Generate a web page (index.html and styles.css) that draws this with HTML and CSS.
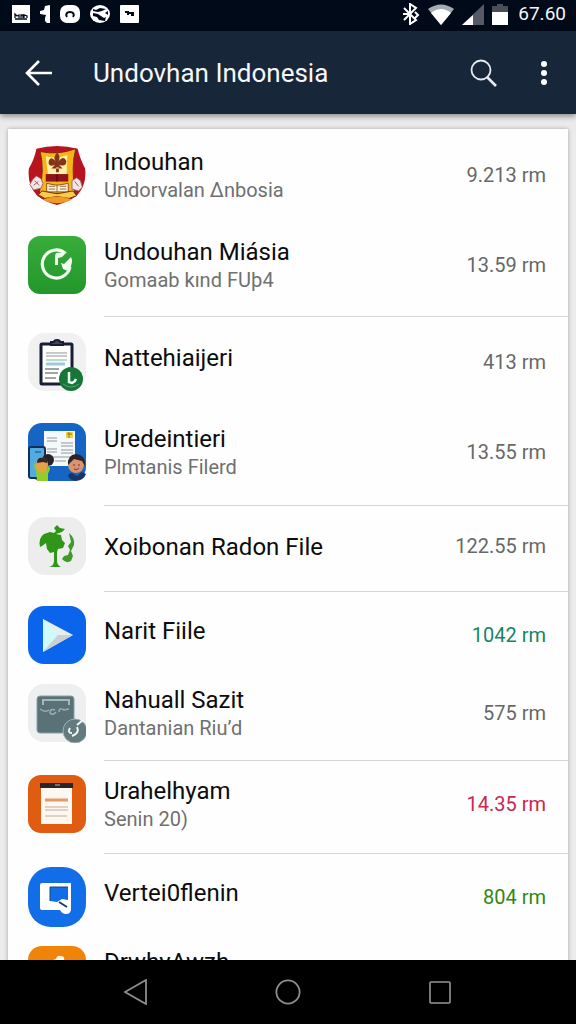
FILE: index.html
```
<!DOCTYPE html>
<html lang="id">
<head>
    <meta charset="UTF-8">
    <meta name="viewport" content="width=device-width, initial-scale=1">
    <title>Undovhan Indonesia</title>
    <link rel="stylesheet" href="styles.css">
</head>
<body>
    <div class="status-bar">
        <div class="status-left">
            <svg width="18" height="18" viewBox="0 0 18 18"><path fill="#fff" d="M0 0h18v18H0z"/><path d="M3 13V9l2 2 2-1v3M9 13v-3h2v3M12 13v-3l3 1v2M3 14h12" fill="none" stroke="#000a18" stroke-width="1.3"/></svg>
            <svg width="10" height="18" viewBox="0 0 10 18"><path fill="#fff" d="M5 1l5-1v18H7l-2-2v-3l1-3-6-1V6l4-1z"/></svg>
            <svg width="20" height="18" viewBox="0 0 20 18"><rect width="20" height="18" rx="7" fill="#fff"/><path d="M7 12c-2-3 0-5 3-5s5 2 3 5" fill="none" stroke="#000a18" stroke-width="2"/></svg>
            <svg width="20" height="18" viewBox="0 0 20 18"><ellipse cx="10" cy="9" rx="10" ry="9" fill="#fff"/><path d="M3 4l3 1 4-2 6 1-4 2-4 1-5-1zM3 8l5 1 6 4 2-1-1 4-6-1-2-3-4-1zM15 8l3-2v4z" fill="#000a18"/></svg>
            <svg width="19" height="18" viewBox="0 0 19 18"><rect width="19" height="18" rx="1" fill="#fff"/><path d="M5 7h3v3M9 8h4v2h-2" fill="none" stroke="#000a18" stroke-width="2"/></svg>
        </div>
        <div class="status-right">
            <svg width="18" height="22" viewBox="0 0 18 22"><path d="M2 5l12 12-6 4V1l6 4L2 17M1 11h6M13 9l3 3-3 3" fill="none" stroke="#fff" stroke-width="2"/></svg>
            <svg width="26" height="21" viewBox="0 0 26 21"><path d="M0 5Q13-4 26 5L13 21z" fill="#a5abb3"/><path d="M3 9Q13 1 23 9L13 21z" fill="#fff"/></svg>
            <svg width="22" height="21" viewBox="0 0 22 21"><path d="M0 21L22 0v21z" fill="#555b65"/><path d="M0 21l11-10v10z" fill="#fff"/></svg>
            <svg width="16" height="21" viewBox="0 0 16 21"><path d="M5 0h6v2h5v7H0V2h5z" fill="#484d56"/><path d="M0 8h16v13H0z" fill="#fff"/></svg>
            <span class="clock">67.60</span>
        </div>
    </div>

    <header class="app-bar">
        <button class="icon-button" aria-label="Kembali">
            <svg width="28" height="28" viewBox="0 0 28 28"><path d="M14 2L2 14l12 12M2 14h25" fill="none" stroke="#fff" stroke-width="2.6"/></svg>
        </button>
        <h1>Undovhan Indonesia</h1>
        <button class="icon-button" aria-label="Cari">
            <svg width="28" height="28" viewBox="0 0 28 28"><circle cx="11" cy="11" r="9.5" fill="none" stroke="#e6eaf0" stroke-width="1.8"/><path d="M17 18l9 9" stroke="#e6eaf0" stroke-width="2.6"/></svg>
        </button>
        <button class="icon-button" aria-label="Menu">
            <svg width="8" height="24" viewBox="0 0 8 24"><g fill="#fff"><circle cx="4" cy="3" r="3"/><circle cx="4" cy="12" r="3"/><circle cx="4" cy="21" r="3"/></g></svg>
        </button>
    </header>

    <main>
        <div class="card">
            <ul class="group">
                <li class="row">
                    <svg class="app-icon" viewBox="0 0 60 64">
                        <path d="M8 4Q30-2 52 4Q55 16 60 25Q62 43 51 54Q41 61 30 64Q18 61 9 54Q-2 43 0 25Q6 15 8 4z" fill="#b81420"/>
                        <path d="M12 7Q31 11 50 4Q45 22 49 52H11Q17 26 12 7z" fill="#f7b318" stroke="#7b2a12"/>
                        <path d="M18 12q12 3 23-1l-1 25H21z" fill="#fff2a8"/>
                        <path d="M30 8q-5 6-1 10-6-8-8 0 0 6 7 3l-4 4h12l-4-4q8 3 8-4-3-7-9 1 4-5-1-10zM29 24h3v5h-3z" fill="#87331c"/>
                        <path d="M18 31h24v8H18z" fill="#8d1418"/><path d="M30 31v8" stroke="#3c080a"/>
                        <path d="M19 41l11 2 12-2v9H19z" fill="#fff4d8" stroke="#8a4d17"/><path d="M30 42v9M21 44h7M21 47h7M33 44h7M33 47h7" stroke="#8b6646"/>
                        <path d="M4 37l4-4 5 3 2 5-2 5-8 2-4-6zM46 38l5-3 4 3 2 7-4 4-7-2z" fill="#f4e5e5" stroke="#a2676a"/><path d="M6 38l5 5M5 43l5-4M49 39l4 5" stroke="#985b61"/>
                        <path d="M14 49l16 3 17-3 4 5-8 3-13-2-13 2-7-4z" fill="#f5cd4b" stroke="#74280d"/><path d="M15 58q15-6 31 0-16 8-31 0z" fill="#ef9b26"/>
                    </svg>
                    <div class="text"><h2>Indouhan</h2><p>Undorvalan Δnbosia</p></div>
                    <span class="size">9.213 rm</span>
                </li>
                <li class="row">
                    <svg class="app-icon" viewBox="0 0 58 58">
                        <defs><linearGradient id="green" x2="0" y2="1"><stop stop-color="#37ad3b"/><stop offset="1" stop-color="#23962b"/></linearGradient></defs>
                        <rect width="58" height="58" rx="12" fill="url(#green)"/>
                        <path d="M37 17A14 14 0 1 0 42 31" fill="none" stroke="#f2fff0" stroke-width="3.2"/>
                        <path d="M28 17l11-1-5 5-4 1v7h-3v-9zM33 27l3 1 7-7 1 3q0 7-4 11l-5-2z" fill="#f2fff0"/>
                    </svg>
                    <div class="text"><h2>Undouhan Miásia</h2><p>Gomaab kınd FUþ4</p></div>
                    <span class="size">13.59 rm</span>
                </li>
            </ul>

            <ul class="group group-tall">
                <li class="row">
                    <svg class="app-icon" viewBox="0 0 58 58">
                        <rect width="58" height="58" rx="17" fill="#f1f1f2"/>
                        <rect x="13" y="11" width="31" height="40" rx="1" fill="#fff" stroke="#171f36" stroke-width="3"/>
                        <path d="M23 12V9h3q0-2 3-2t3 2h3v3z" fill="#414956" stroke="#171f36" stroke-width="2"/>
                        <path d="M18 20h21M18 23h21" stroke="#c8c8c4" stroke-width="2"/><path d="M18 27h21" stroke="#b9ddc9" stroke-width="2"/><path d="M18 31h19" stroke="#9dcdd6" stroke-width="3"/>
                        <path d="M17 36h14M17 40h13M17 45h11" stroke="#444a50" stroke-width="1.2"/>
                        <circle cx="43" cy="46" r="12" fill="#187538"/><path d="M41 39v10l3 1q3-1 4-4" fill="none" stroke="#edfff0" stroke-width="2.5"/><path d="M35 51q8 6 16 0" fill="none" stroke="#58a06b"/>
                    </svg>
                    <div class="text text-single"><h2>Nattehiaijeri</h2></div>
                    <span class="size">413 rm</span>
                </li>
                <li class="row">
                    <svg class="app-icon" viewBox="0 0 58 58">
                        <rect width="58" height="58" rx="14" fill="#1565c5"/>
                        <path d="M16 8h31v35H16z" fill="#f5f9fa"/><path d="M38 9h7v6h-7z" fill="#f1cf38"/><path d="M39 11h5M41 9v6" stroke="#967c20"/>
                        <path d="M19 15h10M19 18h10M19 26h10M19 29h10M33 20h12M33 23h12M33 27h12M33 30h12M25 34h17M27 38h11" stroke="#b2b8bc" stroke-width="1.3"/>
                        <rect x="1" y="24" width="16" height="31" rx="2" fill="#53acdf" stroke="#142e55" stroke-width="2"/><path d="M7 29h6" stroke="#23466d"/>
                        <circle cx="20" cy="37" r="6" fill="#282228"/><path d="M8 42q0-7 6-7t6 7q0 8-6 9t-6-9z" fill="#e7a247"/><path d="M9 40q0-6 6-5t4 5l-4-1z" fill="#352526"/><path d="M8 47l-2-4 1-3 3 8 4 2 5-3 2-5 1 4-2 5v7H9z" fill="#8fcf27"/>
                        <circle cx="48" cy="42" r="8" fill="#d9936d"/><path d="M40 42q-1-10 8-11 10 1 9 12l-3-5-8-2-4 4z" fill="#292529"/><path d="M45 42h2M50 42h2M46 46q3 2 5-1" fill="none" stroke="#703a30"/><path d="M40 53q1-3 4-3l5 3 5-4 4 2q-2 6-10 7-5 0-8-5z" fill="#183663"/>
                    </svg>
                    <div class="text"><h2>Uredeintieri</h2><p>Plmtanis Filerd</p></div>
                    <span class="size">13.55 rm</span>
                </li>
            </ul>

            <ul class="group">
                <li class="row row-short">
                    <svg class="app-icon" viewBox="0 0 58 58">
                        <rect width="58" height="58" rx="18" fill="#ededed"/>
                        <path d="M26 11l3-3 3 3 5 1-3 3-6 2 5 1 1 5 3 3-2 5-5 1-1 3v9q0 4 4 6H21q5-1 5-6V35l-4 1-3-4-1-6-4 3-2 1q-2-9 4-13l6-2 4 1 2-2z" fill="#2f9618"/>
                        <path d="M41 16q6 5 5 12l-3 6 2 5-2 5q-5 3-9-2l2-3 4-1 2-5-2-4 3-4z" fill="#3f9c28"/>
                    </svg>
                    <div class="text"><h2>Xoibonan Radon File</h2></div>
                    <span class="size">122.55 rm</span>
                </li>
            </ul>

            <ul class="group group-open">
                <li class="row row-mid">
                    <svg class="app-icon" viewBox="0 0 58 58">
                        <rect width="58" height="58" rx="16" fill="#0b64ec"/>
                        <path d="M15 13l30 16-30 17z" fill="#e7eef0"/><path d="M15 13l15 16-15 17z" fill="#cefafa"/><path d="M30 29h15L15 46z" fill="#cbd0d5"/>
                    </svg>
                    <div class="text text-single"><h2>Narit Fiile</h2></div>
                    <span class="size teal">1042 rm</span>
                </li>
                <li class="row row-compact">
                    <svg class="app-icon" viewBox="0 0 58 58">
                        <rect width="58" height="58" rx="16" fill="#eeeff0"/>
                        <rect x="9" y="12" width="37" height="37" rx="3" fill="#587277" stroke="#8c9fa2"/>
                        <path d="M15 21v-5h26v5" fill="none" stroke="#a2b8ba" stroke-width="2"/><path d="M12 25q5 4 9 1m6 0q-5-2-5 3 3 3 6-1m3 0q0-5 5-2l5-1" fill="none" stroke="#9bafb1" stroke-width="1.5"/>
                        <circle cx="47" cy="47" r="12" fill="#637a7e" stroke="#a4b0b4"/><path d="M42 44q-3 5 2 5M49 43q3 6-5 9M49 41l6-5" fill="none" stroke="#f0f7f7" stroke-width="2"/>
                    </svg>
                    <div class="text"><h2>Nahuall Sazit</h2><p>Dantanian Riu’d</p></div>
                    <span class="size">575 rm</span>
                </li>
            </ul>

            <ul class="group">
                <li class="row row-mid">
                    <svg class="app-icon" viewBox="0 0 58 58">
                        <rect width="58" height="58" rx="13" fill="#df5c10"/>
                        <path d="M13 8h31v41H13z" fill="#fff8f1"/><path d="M12 8h33v5H12z" fill="#28262c"/><path d="M27 10h5" stroke="#bbb"/>
                        <path d="M17 25h23" stroke="#df9b6b" stroke-width="3"/><path d="M17 32h23M17 35h23M17 41h22" stroke="#c9aa9a" stroke-width="1.2"/>
                    </svg>
                    <div class="text"><h2>Urahelhyam</h2><p>Senin 20)</p></div>
                    <span class="size red">14.35 rm</span>
                </li>
            </ul>

            <ul class="group">
                <li class="row row-mid">
                    <svg class="app-icon" viewBox="0 0 58 60">
                        <rect width="58" height="60" rx="23" fill="#126ee8"/>
                        <path d="M14 16h29v26q0 5-5 5-4 0-6-4H14q-2 0-2-2V18q0-2 2-2z" fill="#fff"/><path d="M22 20h18v13l-6-1-5 3-7-1z" fill="#126ee8"/><path d="M22 34V20h18" fill="none" stroke="#174780"/><path d="M31 35l8 5" stroke="#173e68" stroke-width="2"/>
                    </svg>
                    <div class="text text-single"><h2>Vertei0flenin</h2></div>
                    <span class="size green">804 rm</span>
                </li>
                <li class="row row-compact">
                    <svg class="app-icon" viewBox="0 0 58 58">
                        <rect width="58" height="58" rx="14" fill="#f08409"/><path d="M22 15l6-2q1-4 5-3 4 0 3 5l-3 12-8-2z" fill="#fff4df"/>
                    </svg>
                    <div class="text text-top"><h2>DrwhyAwzh</h2></div>
                </li>
            </ul>
        </div>
    </main>

    <nav class="nav-bar">
        <button aria-label="Back"><svg width="24" height="26" viewBox="0 0 24 26"><path d="M1 13L22 1v24z" fill="none" stroke="#8d8d8d" stroke-width="1.8"/></svg></button>
        <button aria-label="Home"><svg width="26" height="26" viewBox="0 0 26 26"><circle cx="13" cy="13" r="11.6" fill="none" stroke="#8d8d8d" stroke-width="1.8"/></svg></button>
        <button aria-label="Recent"><svg width="24" height="24" viewBox="0 0 24 24"><rect x="2" y="2" width="20" height="21" rx="1" fill="none" stroke="#9a9595" stroke-width="1.6"/></svg></button>
    </nav>
</body>
</html>
```
FILE: styles.css
```
* {
    box-sizing: border-box;
}
body {
    margin: 0;
    height: 100vh;
    display: flex;
    flex-direction: column;
    overflow: hidden;
    font-family: Roboto, "Liberation Sans", sans-serif;
    background-color: #ebebec;
}
svg {
    display: block;
    flex: none;
}
h1, h2, p, ul {
    margin: 0;
    padding: 0;
    font-weight: 400;
}
button {
    display: flex;
    align-items: center;
    justify-content: center;
    padding: 0;
    border: none;
    background: none;
    cursor: pointer;
}

/* top bars */
.status-bar {
    flex: none;
    display: flex;
    justify-content: space-between;
    height: 31px;
    padding: 0 10px 3px 12px;
    background-color: #000a18;
}
.status-left, .status-right {
    display: flex;
    align-items: center;
    gap: 10px;
}
.status-right {
    gap: 8px;
}
.clock {
    margin-left: 2px;
    font-size: 19px;
    line-height: 24px;
    color: #f4f6f8;
}
.app-bar {
    flex: none;
    display: flex;
    align-items: center;
    height: 83px;
    padding: 0 12px 0 19px;
    background-color: #18263a;
    box-shadow: 0 2px 6px rgba(0,0,0,0.45);
    z-index: 1;
}
.app-bar h1 {
    flex: 1;
    padding-left: 34px;
    font-size: 26px;
    line-height: 32px;
    color: #f5f7fa;
}
.icon-button {
    width: 40px;
    height: 48px;
}
.icon-button:last-child {
    margin-left: 20px;
}

/* list */
main {
    flex: 1;
    min-height: 0;
    overflow: hidden;
    padding: 15px 8px 0;
}
.card {
    padding-top: 1px;
    background-color: #fefefe;
    box-shadow: 0 0 4px rgba(0,0,0,0.3);
}
.group {
    list-style: none;
    padding-bottom: 6px;
}
.group-tall {
    padding-bottom: 8px;
}
.group-open {
    padding-bottom: 12px;
}
.group + .group::before {
    content: "";
    display: block;
    height: 1px;
    margin-left: 96px;
    background-color: #d4d6d6;
}
.row {
    display: flex;
    align-items: center;
    height: 90px;
    padding: 0 22px 0 20px;
}
.row-mid {
    height: 86px;
}
.row-short {
    height: 79px;
}
.row-compact {
    height: 70px;
}
.app-icon {
    width: 58px;
    height: 60px;
}
.text {
    flex: 1;
    min-width: 0;
    padding: 2px 0 0 18px;
}
.text-single {
    padding-top: 0;
    padding-bottom: 8px;
}
.text-top {
    align-self: flex-start;
    padding-top: 8px;
}
.text h2 {
    font-size: 24px;
    line-height: 28px;
    color: #0c0c0c;
}
.text p {
    font-size: 20px;
    line-height: 28px;
    color: #707070;
}
.size {
    font-size: 20px;
    line-height: 28px;
    color: #686868;
}
.teal {
    color: #168465;
}
.red {
    color: #c92750;
}
.green {
    color: #31880f;
}

/* system navigation */
.nav-bar {
    flex: none;
    display: flex;
    justify-content: center;
    gap: 104px;
    height: 64px;
    background-color: #000;
    z-index: 1;
}
.nav-bar button {
    width: 48px;
}
```
